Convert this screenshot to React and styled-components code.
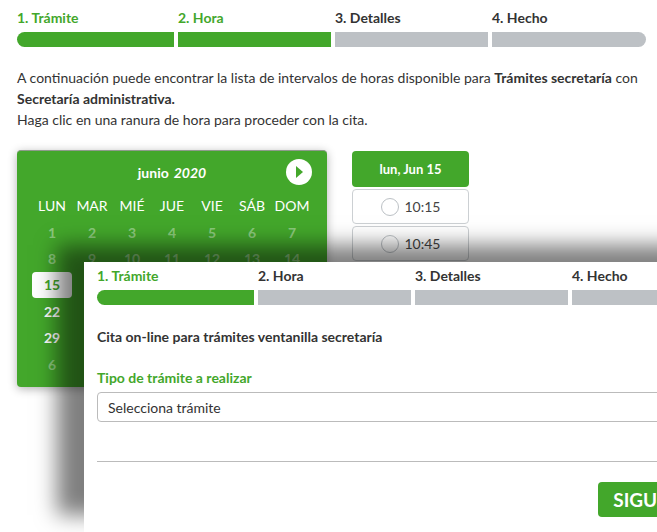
import styled, { createGlobalStyle } from "styled-components";

const green = "#43a72b";
const barGrey = "#bdc1c5";

const Global = createGlobalStyle`
    html, body {
        margin: 0;
        padding: 0;
        background: #fff;
        overflow: hidden;
    }
    body {
        font-family: Lato, "Open Sans", sans-serif;
        color: #333;
    }
`

const Page = styled.div`
    position: relative;
    width: 657px;
    height: 532px;
    overflow: hidden;
    padding: 10px 0 0 17px;
    box-sizing: border-box;
`

const Main = styled.div`
    width: 629px;
`

const StepGrid = styled.div`
    display: grid;
    grid-template-columns: 157px 153px 153px 154px;
    column-gap: 4px;
`

const StepCol = styled.div`
    display: flex;
    flex-direction: column;
`

const StepLabel = styled.div`
    font-size: 14px;
    font-weight: 700;
    line-height: 15px;
    height: 22px;
    color: ${(p) => (p.$on ? green : "#333")};
`

const StepBar = styled.div`
    height: 15px;
    background: ${(p) => (p.$on ? green : barGrey)};
    border-radius: ${(p) => p.$radius};
`

const Intro = styled.p`
    margin: 20px 0 0;
    font-size: 14px;
    line-height: 21px;
    width: 640px;
    strong {
        font-weight: 700;
    }
`

const BookRow = styled.div`
    display: flex;
    align-items: flex-start;
    gap: 25px;
    margin-top: 20px;
`

const Calendar = styled.div`
    width: 310px;
    height: 237px;
    box-sizing: border-box;
    background: ${green};
    border-top: 1px solid #8f9a8c;
    border-radius: 4px;
    box-shadow: 0 2px 10px rgba(0, 0, 0, 0.3);
    padding: 7px 15px 0;
`

const CalHead = styled.div`
    position: relative;
    height: 28px;
    display: flex;
    align-items: center;
    justify-content: center;
    gap: 5px;
    color: #fff;
    font-size: 14px;
    font-weight: 700;
    em {
        font-style: italic;
    }
`

const NextBtn = styled.svg`
    position: absolute;
    right: 0;
    top: 1px;
    width: 26px;
    height: 26px;
`

const WeekGrid = styled.div`
    display: grid;
    grid-template-columns: repeat(7, 40px);
    margin-top: 5px;
`

const DayName = styled.div`
    height: 28px;
    display: flex;
    align-items: center;
    justify-content: center;
    color: #fff;
    font-size: 14px;
`

const DayCell = styled.div`
    height: 26.4px;
    display: flex;
    align-items: center;
    justify-content: center;
    font-size: 14px;
    font-weight: 700;
    color: ${(p) => (p.$sel ? green : p.$open ? "#fff" : "rgba(255, 255, 255, 0.4)")};
    background: ${(p) => (p.$sel ? "#fff" : "transparent")};
    border-radius: 4px;
`

const Slots = styled.div`
    width: 117px;
    display: flex;
    flex-direction: column;
    gap: 2px;
    margin-top: 1px;
`

const SlotHead = styled.div`
    height: 36px;
    background: ${green};
    border-radius: 4px;
    display: flex;
    align-items: center;
    justify-content: center;
    color: #fff;
    font-size: 13px;
    font-weight: 700;
`

const Slot = styled.div`
    height: 35px;
    box-sizing: border-box;
    border: 1px solid #ccd0d3;
    border-radius: 4px;
    display: flex;
    align-items: center;
    justify-content: center;
    gap: 6px;
    font-size: 14px;
    color: #444;
`

const Radio = styled.span`
    width: 16px;
    height: 16px;
    border: 1px solid #bcc1c5;
    border-radius: 50%;
`

const Dialog = styled.div`
    position: absolute;
    left: 84px;
    top: 262px;
    width: 655px;
    height: 270px;
    box-sizing: border-box;
    background: #fff;
    padding: 6px 13px 0;
    box-shadow: -27px -17px 20px rgba(0, 0, 0, 0.5);
`

const DialogTitle = styled.div`
    margin-top: 24px;
    font-size: 14px;
    font-weight: 700;
    line-height: 16px;
`

const FieldLabel = styled.label`
    display: block;
    margin-top: 25px;
    font-size: 14px;
    font-weight: 700;
    line-height: 16px;
    color: ${green};
`

const SelectBox = styled.div`
    margin-top: 6px;
    height: 30px;
    box-sizing: border-box;
    border: 1px solid #bbb;
    border-radius: 4px;
    padding-left: 10px;
    display: flex;
    align-items: center;
    font-size: 14px;
`

const Rule = styled.hr`
    margin: 39px 0 0;
    border: 0;
    border-top: 1px solid #bbb;
`

const Actions = styled.div`
    display: flex;
    justify-content: flex-end;
    margin-top: 20px;
`

const NextButton = styled.button`
    width: 128px;
    height: 35px;
    border: 0;
    border-radius: 4px;
    background: ${green};
    color: #fff;
    font-family: inherit;
    font-size: 19px;
    font-weight: 700;
`

const steps = ["1. Trámite", "2. Hora", "3. Detalles", "4. Hecho"];
const radii = ["8px 0 0 8px", "0", "0", "0 8px 8px 0"];
const dayNames = ["LUN", "MAR", "MIÉ", "JUE", "VIE", "SÁB", "DOM"];
const days = [1, 2, 3, 4, 5, 6, 7, 8, 9, 10, 11, 12, 13, 14, 15, 16, 17, 18, 19, 20, 21, 22, 23, 24, 25, 26, 27, 28, 29, 30, 1, 2, 3, 4, 5, 6, 7, 8, 9, 10, 11, 12];

function Stepper({ done }) {
    return <StepGrid>
        {steps.map((s, i) => <StepCol key={s}>
            <StepLabel $on={i < done}>{s}</StepLabel>
            <StepBar $on={i < done} $radius={radii[i]} />
        </StepCol>)}
    </StepGrid>
}

export default function App() {
    return <Page>
        <Global />
        <Main>
            <Stepper done={2} />
            <Intro>
                A continuación puede encontrar la lista de intervalos de horas disponible para <strong>Trámites secretaría</strong> con <strong>Secretaría administrativa.</strong>
                <br />
                Haga clic en una ranura de hora para proceder con la cita.
            </Intro>
            <BookRow>
                <Calendar>
                    <CalHead>
                        <span>junio</span> <em>2020</em>
                        <NextBtn viewBox="0 0 26 26">
                            <circle cx="13" cy="13" r="13" fill="#fff" />
                            <path d="M10 7 L17 13 L10 19 Z" fill={green} />
                        </NextBtn>
                    </CalHead>
                    <WeekGrid>
                        {dayNames.map((d) => <DayName key={d}>{d}</DayName>)}
                        {days.map((d, i) => <DayCell
                            key={i}
                            $sel={i === 14}
                            $open={i === 21 || i === 28}
                        >{d}</DayCell>)}
                    </WeekGrid>
                </Calendar>
                <Slots>
                    <SlotHead>lun, Jun 15</SlotHead>
                    <Slot><Radio />10:15</Slot>
                    <Slot><Radio />10:45</Slot>
                </Slots>
            </BookRow>
        </Main>
        <Dialog>
            <Stepper done={1} />
            <DialogTitle>Cita on-line para trámites ventanilla secretaría</DialogTitle>
            <FieldLabel>Tipo de trámite a realizar</FieldLabel>
            <SelectBox>Selecciona trámite</SelectBox>
            <Rule />
            <Actions>
                <NextButton>SIGUIENTE</NextButton>
            </Actions>
        </Dialog>
    </Page>
}
